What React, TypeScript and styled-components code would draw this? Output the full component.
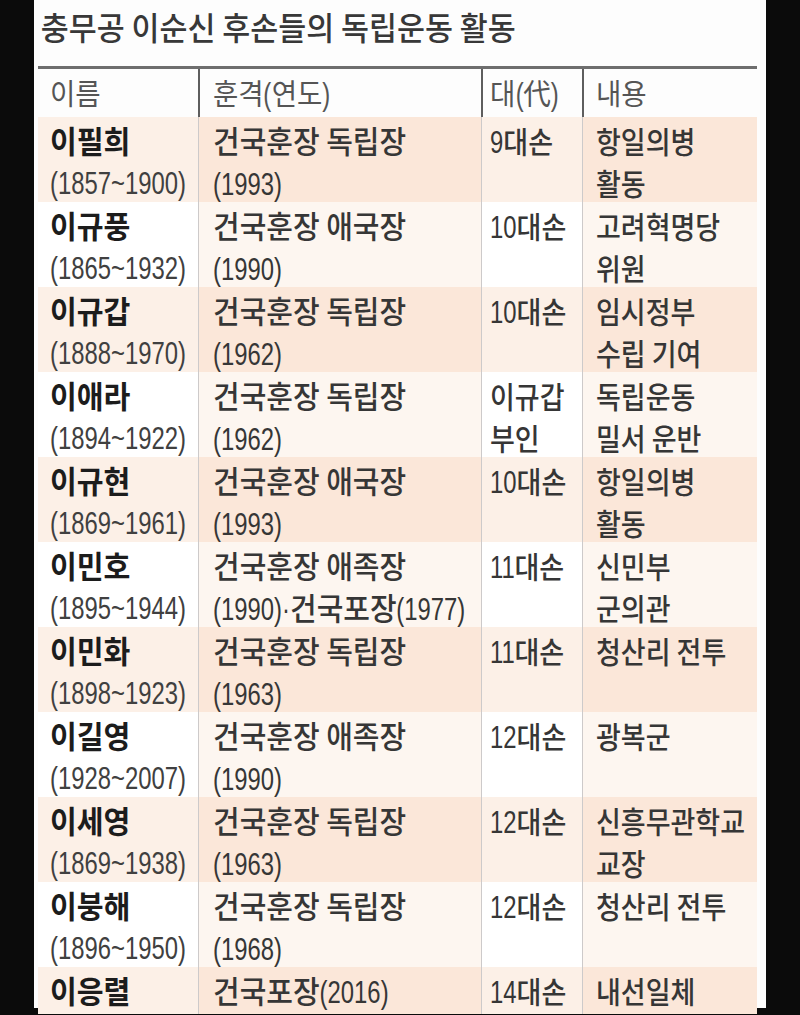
import styled, { createGlobalStyle } from "styled-components";
import { FC, ReactNode } from "react";

const KO = `"Noto Sans CJK KR", "Noto Sans", sans-serif`;
const DIGITS = `"Liberation Sans", Arial, sans-serif`;
// the print face uses condensed numerals; Liberation Sans squeezed to this ratio matches them
const NUM_SCALE = 0.77;
const NUM_SIZE = 31;

const GlobalStyle = createGlobalStyle`
  html, body {
    margin: 0;
    padding: 0;
    background: #0b0b0b;
  }
  body {
    height: 1015px;
    overflow: hidden;
  }
`;

const Sheet = styled.div`
  width: 732px;
  height: 1008px;
  margin-left: 34px;
  padding: 0 9px 0 4px;
  box-sizing: border-box;
  background: #fdfdfd;
`;

const Title = styled.h1`
  margin: 0;
  height: 66px;
  padding-left: 3px;
  font-family: ${KO};
  font-size: 32px;
  font-weight: 500;
  line-height: 52px;
  color: #383838;
  white-space: nowrap;
  transform: scaleX(0.95);
  transform-origin: 0 50%;
`;

const Table = styled.div`
  border-top: 3px solid #6e6e6e;
`;

const COLS = "160px 283px 101px 175px";

const HeaderRow = styled.div`
  display: grid;
  grid-template-columns: ${COLS};
  height: 48px;
`;

const HeaderCell = styled.div<{ $pad: number; $first?: boolean }>`
  padding-left: ${(p) => p.$pad}px;
  border-left: ${(p) => (p.$first ? "none" : "2px solid #5e5e5e")};
`;

const Row = styled.div<{ $last?: boolean }>`
  display: grid;
  grid-template-columns: ${COLS};
  height: ${(p) => (p.$last ? 41 : 85)}px;
`;

const Cell = styled.div<{ $pad: number; $bg: string; $first?: boolean }>`
  padding: 2px 0 0 ${(p) => p.$pad}px;
  background: ${(p) => p.$bg};
  border-left: ${(p) => (p.$first ? "none" : "1px solid #cdcaca")};
`;

const Line = styled.div<{
  $size: number;
  $sx: number;
  $weight?: number;
  $color?: string;
  $lh?: number;
}>`
  font-family: ${KO};
  font-size: ${(p) => p.$size}px;
  font-weight: ${(p) => p.$weight ?? 500};
  color: ${(p) => p.$color ?? "#363636"};
  line-height: ${(p) => p.$lh ?? 42}px;
  white-space: nowrap;
  transform: scaleX(${(p) => p.$sx});
  transform-origin: 0 50%;
`;

const Num = styled.span<{ $r: number; $w: number }>`
  display: inline-block;
  font-family: ${DIGITS};
  font-size: ${NUM_SIZE}px;
  font-weight: 400;
  transform: scaleX(${(p) => p.$r});
  transform-origin: 0 50%;
  margin-right: ${(p) => -(1 - p.$r) * p.$w * NUM_SIZE}px;
`;

const NUM_WIDTH: Record<string, number> = {
  "(": 0.333,
  ")": 0.333,
  "~": 0.584,
  "·": 0.333,
};

const numWidth = (s: string) =>
  [...s].reduce((sum, ch) => sum + (NUM_WIDTH[ch] ?? 0.556), 0);

const fmt = (text: string, sx: number): ReactNode[] =>
  text
    .split(/([0-9()~·]+)/)
    .filter(Boolean)
    .map((part, i) =>
      /^[0-9()~·]+$/.test(part) ? (
        <Num key={i} $r={NUM_SCALE / sx} $w={numWidth(part)}>
          {part}
        </Num>
      ) : (
        part
      )
    );

type Entry = {
  name: string;
  years?: string;
  award: string[];
  gen: string[];
  detail: string[];
};

const ENTRIES: Entry[] = [
  { name: "이필희", years: "(1857~1900)", award: ["건국훈장 독립장", "(1993)"], gen: ["9대손"], detail: ["항일의병", "활동"] },
  { name: "이규풍", years: "(1865~1932)", award: ["건국훈장 애국장", "(1990)"], gen: ["10대손"], detail: ["고려혁명당", "위원"] },
  { name: "이규갑", years: "(1888~1970)", award: ["건국훈장 독립장", "(1962)"], gen: ["10대손"], detail: ["임시정부", "수립 기여"] },
  { name: "이애라", years: "(1894~1922)", award: ["건국훈장 독립장", "(1962)"], gen: ["이규갑", "부인"], detail: ["독립운동", "밀서 운반"] },
  { name: "이규현", years: "(1869~1961)", award: ["건국훈장 애국장", "(1993)"], gen: ["10대손"], detail: ["항일의병", "활동"] },
  { name: "이민호", years: "(1895~1944)", award: ["건국훈장 애족장", "(1990)·건국포장(1977)"], gen: ["11대손"], detail: ["신민부", "군의관"] },
  { name: "이민화", years: "(1898~1923)", award: ["건국훈장 독립장", "(1963)"], gen: ["11대손"], detail: ["청산리 전투"] },
  { name: "이길영", years: "(1928~2007)", award: ["건국훈장 애족장", "(1990)"], gen: ["12대손"], detail: ["광복군"] },
  { name: "이세영", years: "(1869~1938)", award: ["건국훈장 독립장", "(1963)"], gen: ["12대손"], detail: ["신흥무관학교", "교장"] },
  { name: "이붕해", years: "(1896~1950)", award: ["건국훈장 독립장", "(1968)"], gen: ["12대손"], detail: ["청산리 전투"] },
  { name: "이응렬", award: ["건국포장(2016)"], gen: ["14대손"], detail: ["내선일체"] },
];

const HEADERS = [
  { label: "이름", pad: 12 },
  { label: "훈격(연도)", pad: 13 },
  { label: "대(代)", pad: 7 },
  { label: "내용", pad: 12 },
];

// odd rows carry the stronger peach band, columns 2 and 4 a little deeper
const shades = (odd: boolean) =>
  odd
    ? { light: "#fcf0e7", deep: "#fbe7d9" }
    : { light: "#ffffff", deep: "#fdf6f0" };

const App: FC = () => {
  return (
    <>
      <GlobalStyle />
      <Sheet>
        <Title>충무공 이순신 후손들의 독립운동 활동</Title>
        <Table>
          <HeaderRow>
            {HEADERS.map((h, i) => (
              <HeaderCell key={h.label} $pad={h.pad} $first={i === 0}>
                <Line $size={29} $sx={0.95} $lh={46} $weight={400} $color="#555">
                  {fmt(h.label, 0.95)}
                </Line>
              </HeaderCell>
            ))}
          </HeaderRow>
          {ENTRIES.map((e, i) => {
            const s = shades(i % 2 === 0);
            return (
              <Row key={e.name} $last={i === ENTRIES.length - 1}>
                <Cell $pad={12} $bg={s.light} $first>
                  <Line $size={31} $sx={0.94} $weight={700} $color="#1c1c1c">
                    {e.name}
                  </Line>
                  {e.years && (
                    <Line $size={29} $sx={1} $lh={40} $color="#404040">
                      {fmt(e.years, 1)}
                    </Line>
                  )}
                </Cell>
                <Cell $pad={14} $bg={s.deep}>
                  {e.award.map((t) => (
                    <Line key={t} $size={31} $sx={0.935}>
                      {fmt(t, 0.935)}
                    </Line>
                  ))}
                </Cell>
                <Cell $pad={8} $bg={s.light}>
                  {e.gen.map((t) => (
                    <Line key={t} $size={30} $sx={0.9}>
                      {fmt(t, 0.9)}
                    </Line>
                  ))}
                </Cell>
                <Cell $pad={13} $bg={s.deep}>
                  {e.detail.map((t) => (
                    <Line key={t} $size={30} $sx={0.9}>
                      {t}
                    </Line>
                  ))}
                </Cell>
              </Row>
            );
          })}
        </Table>
      </Sheet>
    </>
  );
};

export default App;
